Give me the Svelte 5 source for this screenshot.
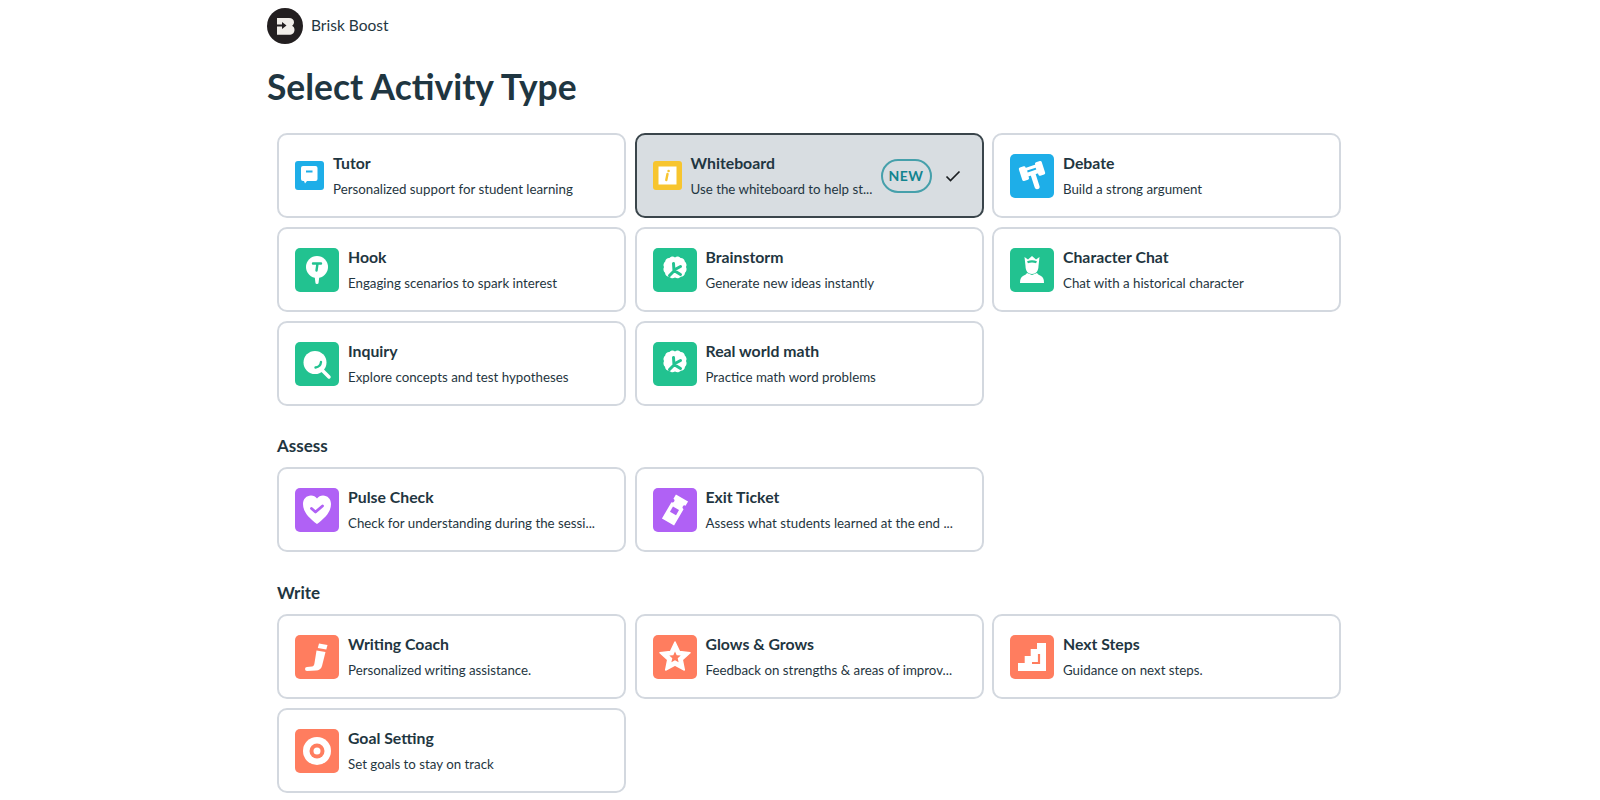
<script>
    const sections = [
        {
            title: null,
            cards: [
                { name: "Tutor", desc: "Personalized support for student learning", icon: "tutor", color: "#1eaee8", small: true },
                { name: "Whiteboard", desc: "Use the whiteboard to help st...", icon: "whiteboard", color: "#f7c52f", small: true, selected: true },
                { name: "Debate", desc: "Build a strong argument", icon: "debate", color: "#1eaee8" },
                { name: "Hook", desc: "Engaging scenarios to spark interest", icon: "hook", color: "#22c290" },
                { name: "Brainstorm", desc: "Generate new ideas instantly", icon: "brain", color: "#22c290" },
                { name: "Character Chat", desc: "Chat with a historical character", icon: "character", color: "#22c290" },
                { name: "Inquiry", desc: "Explore concepts and test hypotheses", icon: "inquiry", color: "#22c290" },
                { name: "Real world math", desc: "Practice math word problems", icon: "brain", color: "#22c290" }
            ]
        },
        {
            title: "Assess",
            cards: [
                { name: "Pulse Check", desc: "Check for understanding during the sessi...", icon: "pulse", color: "#b061f5" },
                { name: "Exit Ticket", desc: "Assess what students learned at the end ...", icon: "ticket", color: "#b061f5" }
            ]
        },
        {
            title: "Write",
            cards: [
                { name: "Writing Coach", desc: "Personalized writing assistance.", icon: "writing", color: "#ff7d5f" },
                { name: "Glows & Grows", desc: "Feedback on strengths & areas of improv...", icon: "star", color: "#ff7d5f" },
                { name: "Next Steps", desc: "Guidance on next steps.", icon: "steps", color: "#ff7d5f" },
                { name: "Goal Setting", desc: "Set goals to stay on track", icon: "goal", color: "#ff7d5f" }
            ]
        }
    ]
</script>

{#snippet glyph(icon, color)}
    {#if icon === "tutor"}
        <path d="M8 5h12.500a2 2 0 0 1 2 2v11a2 2 0 0 1-2 2h-8.500l-2 2.500-1-2.500h-1a2 2 0 0 1-2-2V7a2 2 0 0 1 2-2z" fill="#fff"/>
        <rect x="11" y="9.500" width="6.500" height="2" fill={color}/>
    {:else if icon === "whiteboard"}
        <rect x="5.500" y="5.500" width="18" height="18" fill="#fff"/>
        <path d="M14.500 13l-1.200 6" stroke={color} stroke-width="2.400" stroke-linecap="round"/>
        <circle cx="15.600" cy="10" r="1.300" fill={color}/>
    {:else if icon === "debate"}
        <g transform="rotate(-18 22 17)">
            <rect x="19.500" y="17" width="5" height="19" rx="2.500" fill="#fff"/>
            <rect x="10" y="10" width="7" height="14" rx="1.500" fill="#fff"/>
            <rect x="27" y="10" width="7" height="14" rx="1.500" fill="#fff"/>
            <rect x="15" y="12" width="14" height="9" fill="#fff"/>
            <rect x="17.500" y="15" width="9" height="2" fill={color}/>
        </g>
    {:else if icon === "hook"}
        <circle cx="22" cy="19" r="11" fill="#fff"/>
        <path d="M19.500 27h5l-.9 7.500a1.600 1.600 0 0 1-3.200 0z" fill="#fff"/>
        <path d="M18 15.500h8M22.500 15.500l-1 7" stroke={color} stroke-width="2.400" stroke-linecap="round"/>
    {:else if icon === "brain"}
        <path d="M22 9.500c2-1.500 4-1 5.500.5 2.200-.2 4 1.300 4.300 3.500 1.800 1.500 2.200 3.800 1.200 5.500 1 2 .7 4.300-1 5.800-.2 2.400-2 4-4.300 4-1.500 1.600-3.700 2-5.700.7-2 1.300-4.200.9-5.700-.7-2.300 0-4.100-1.600-4.300-4-1.700-1.500-2-3.800-1-5.800-1-1.700-.6-4 1.200-5.500.3-2.200 2.100-3.700 4.300-3.500 1.500-1.500 3.500-2 5.500-.5z" fill="#fff"/>
        <path d="M20.500 15.500l.5 7.500-4.500 4.500M21 22l6.500-3.500M21 22.500l6.500 4" stroke={color} stroke-width="3" fill="none" stroke-linecap="round"/>
    {:else if icon === "character"}
        <path d="M14.500 9l3.500 2.500L22 8l4 3.500L29.500 9l-1 9c0 5-2.500 8-6.500 8s-6.500-3-6.500-8z" fill="#fff"/>
        <path d="M17.500 14.300c3-1.300 6-1.300 9 0" stroke={color} stroke-width="2.200" fill="none"/>
        <path d="M17 25l5 2 5-2c1 1.500 2 2 4 3 2 1 3 3 3 7H10c0-4 1-6 3-7 2-1 3-1.500 4-3z" fill="#fff"/>
    {:else if icon === "inquiry"}
        <circle cx="20" cy="20.500" r="11.500" fill="#fff"/>
        <path d="M27 28l7 7" stroke="#fff" stroke-width="3.500" stroke-linecap="round"/>
        <path d="M26 20c-.3 3-2.500 5-5.500 5.500" stroke={color} stroke-width="2.400" fill="none" stroke-linecap="round"/>
    {:else if icon === "pulse"}
        <path d="M22 36C14 30 8 24 8 16c0-5 3.500-8.500 8-8.500 2.500 0 4.500 1 6 3 1.500-2 3.500-3 6-3 4.500 0 8 3.500 8 8.500 0 8-6 14-14 20z" fill="#fff"/>
        <path d="M16.500 20.500l4 3.500 7-6" stroke={color} stroke-width="2.800" fill="none" stroke-linecap="round" stroke-linejoin="round"/>
    {:else if icon === "ticket"}
        <g transform="rotate(30 22 22)">
            <path d="M15 8h14v5a2 2 0 0 0 0 4v19H15V17a2 2 0 0 0 0-4z" fill="#fff"/>
            <rect x="18.500" y="20" width="7" height="6" fill={color}/>
        </g>
    {:else if icon === "writing"}
        <path d="M21.500 15.500l9 1.500-3.500 14c-.8 3-3 4.300-6 4.500l-9 .5a2 2 0 0 1 0-4l5-.5c1.500-.2 2.200-1.200 2.500-3.500z" fill="#fff"/>
        <path d="M24 8.500l8.500 1.500-1.200 4.500-8.500-1.500z" fill="#fff"/>
    {:else if icon === "star"}
        <path d="M22 7l4.500 9.500 10.500 1.300-7.700 7 2 10.200L22 30l-9.300 5 2-10.200-7.700-7 10.500-1.300z" fill="#fff" stroke="#fff" stroke-width="1.500" stroke-linejoin="round"/>
        <path d="M22 16.500l1.700 3.700 4 .4-3 2.700.9 4-3.600-2.100-3.600 2.100.9-4-3-2.700 4-.4z" fill={color}/>
    {:else if icon === "steps"}
        <path d="M27 8h9v28H8v-8h6.700v-7H20.700v-7H27z" fill="#fff"/>
        <path d="M29 19v9h-7" stroke={color} stroke-width="2.200" fill="none"/>
    {:else if icon === "goal"}
        <circle cx="22" cy="22" r="14" fill="#fff"/>
        <circle cx="22" cy="22" r="7.500" fill={color}/>
        <circle cx="22" cy="22" r="3.500" fill="#fff"/>
    {/if}
{/snippet}

<div class="page">
    <header class="brand">
        <svg class="logo" viewBox="0 0 36 36" width="36" height="36">
            <circle cx="18" cy="18" r="18" fill="#231f20"/>
            <path d="M10 10h12c3.200 0 5 1.700 5 4.200 0 1.600-.8 2.800-2 3.500 1.600.7 2.500 2 2.500 4 0 3-2 5-5.500 5H10z" fill="#f1eee9"/>
            <path d="M7 17.500h9.500" stroke="#231f20" stroke-width="2"/>
            <path d="M15 14l4.500 3.500-4.500 3.500z" fill="#231f20"/>
        </svg>
        <span>Brisk Boost</span>
    </header>

    <h1>Select Activity Type</h1>

    {#each sections as section}
        <section>
            {#if section.title}
                <h2>{section.title}</h2>
            {/if}
            <div class="grid">
                {#each section.cards as card}
                    <div class="card" class:selected={card.selected}>
                        <div class="icon" class:small={card.small} style="background-color: {card.color}">
                            <svg viewBox={card.small ? "0 0 29 29" : "0 0 44 44"}>
                                {@render glyph(card.icon, card.color)}
                            </svg>
                        </div>
                        <div class="text">
                            <div class="name">{card.name}</div>
                            <div class="desc">{card.desc}</div>
                        </div>
                        {#if card.selected}
                            <span class="badge">NEW</span>
                            <svg class="check" viewBox="0 0 16 12" width="16" height="12">
                                <path d="M1.500 6.500l4 4 9-9" stroke="#1b1f22" stroke-width="1.700" fill="none"/>
                            </svg>
                        {/if}
                    </div>
                {/each}
            </div>
        </section>
    {/each}
</div>

<style>
    :global(body){
        background-color: #ffffff;
        font-family: "Lato", "Liberation Sans", sans-serif;
        color: #1f3641;
    }

    .page{
        width: 1074px;
        margin-left: 267px;
        padding-top: 8px;
    }

    /* HEADER */

    .brand{
        display: flex;
        align-items: center;
        gap: 8px;
        height: 36px;
        font-size: 15.500px;
    }
    .brand span{
        padding-bottom: 3px;
    }
    .logo{
        flex-shrink: 0;
    }
    h1{
        margin: 21px 0 0 0;
        font-size: 35.400px;
        line-height: 44px;
        font-weight: 700;
    }

    /* SECTIONS */

    section{
        padding-left: 10px;
    }
    section:first-of-type{
        margin-top: 24px;
    }
    h2{
        margin: 0;
        box-sizing: border-box;
        height: 46px;
        padding-top: 15px;
        font-size: 17px;
        line-height: 20px;
        font-weight: 700;
    }
    section + section{
        margin-top: 15px;
    }
    section:last-of-type{
        margin-top: 16px;
    }
    .grid{
        display: grid;
        grid-template-columns: repeat(3, 349px);
        column-gap: 8.500px;
        row-gap: 9px;
        grid-auto-rows: 85px;
    }

    /* CARDS */

    .card{
        display: flex;
        align-items: center;
        box-sizing: border-box;
        padding: 0 18px 0 16px;
        border: 2px solid #d3d8df;
        border-radius: 10px;
        background-color: #ffffff;
    }
    .card.selected{
        background-color: #d8dde1;
        border-color: #3a454b;
    }
    .icon{
        width: 44px;
        height: 44px;
        flex-shrink: 0;
        border-radius: 5px;
        margin-right: 9px;
    }
    .icon.small{
        width: 29px;
        height: 29px;
        border-radius: 3px;
    }
    .icon svg{
        display: block;
        width: 100%;
        height: 100%;
    }
    .text{
        flex: 1;
        min-width: 0;
    }
    .name{
        font-size: 15.800px;
        line-height: 20px;
        font-weight: 700;
    }
    .desc{
        margin-top: 7px;
        font-size: 13.300px;
        line-height: 18px;
        white-space: nowrap;
    }
    .badge{
        width: 51px;
        height: 34px;
        flex-shrink: 0;
        box-sizing: border-box;
        display: flex;
        align-items: center;
        justify-content: center;
        border: 2px solid #46a0ab;
        border-radius: 17px;
        color: #12848f;
        font-size: 14px;
        font-weight: 700;
        letter-spacing: 0.500px;
    }
    .check{
        flex-shrink: 0;
        margin-left: 13px;
        margin-right: 3px;
    }
</style>
